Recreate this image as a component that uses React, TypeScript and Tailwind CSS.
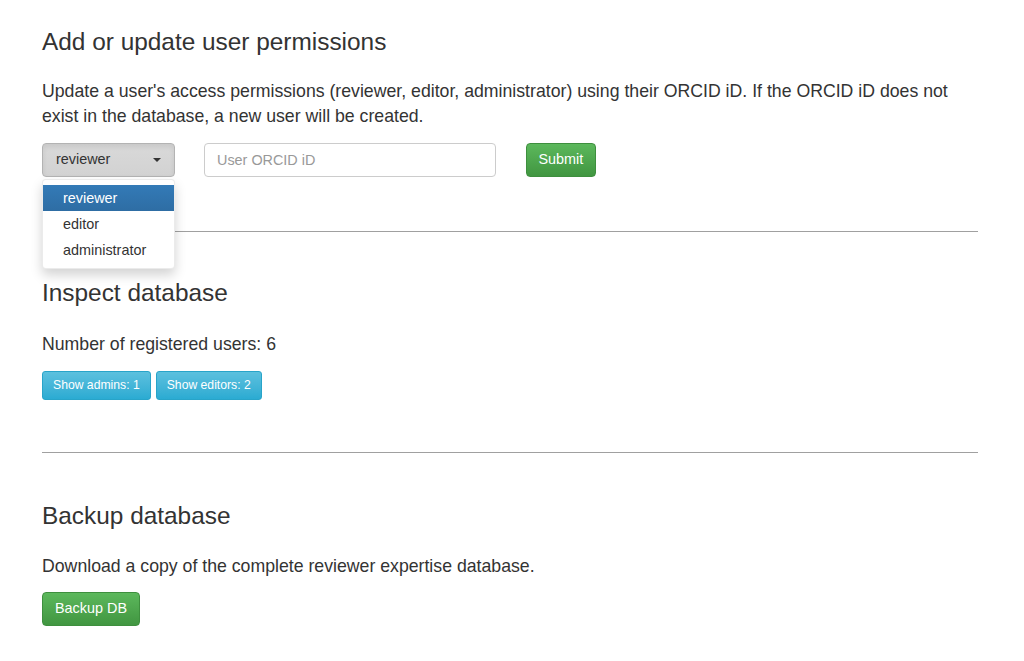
import { useState } from 'react';

const roles = ['reviewer', 'editor', 'administrator'];

export default function App() {
  const [role, setRole] = useState('reviewer');
  const [open, setOpen] = useState(true);
  const [orcid, setOrcid] = useState('');

  return (
    <div className="min-h-screen bg-white text-[#333] font-['Liberation_Sans',Arial,sans-serif]">
      <div className="px-[42px] pt-[29px] w-[1020px]">
        {/* Permissions */}
        <h3 className="text-[24.4px] leading-[26px]">Add or update user permissions</h3>
        <p className="mt-[24px] text-[17.7px] leading-[25px]">
          Update a user's access permissions (reviewer, editor, administrator) using their ORCID iD. If the ORCID iD does not
          exist in the database, a new user will be created.
        </p>
        <div className="mt-[14px] flex items-center">
          <div className="relative">
            <button
              onClick={() => setOpen(!open)}
              className="w-[133px] h-[34px] pl-[13px] pr-[13px] flex items-center justify-between rounded-[4px] border border-[#b3b3b3] bg-gradient-to-b from-[#d9d9d9] to-[#d2d2d2] shadow-[inset_0_3px_5px_rgba(0,0,0,0.08)] text-[14.4px]"
            >
              <span>{role}</span>
              <span className="w-0 h-0 border-l-[4px] border-r-[4px] border-t-[4px] border-l-transparent border-r-transparent border-t-[#333]" />
            </button>
            {open && (
              <ul className="absolute left-0 top-[36px] z-10 w-[133px] py-[5px] rounded-[4px] bg-white border border-black/[0.08] shadow-[0_6px_12px_rgba(0,0,0,0.175)] text-[14.4px]">
                {roles.map((r) => (
                  <li
                    key={r}
                    onClick={() => {
                      setRole(r);
                      setOpen(false);
                    }}
                    className={
                      r === role
                        ? 'h-[26px] leading-[26px] pl-[20px] text-white bg-gradient-to-b from-[#337ab7] to-[#2e6da4] cursor-pointer'
                        : 'h-[26px] leading-[26px] pl-[20px] text-[#333] cursor-pointer'
                    }
                  >
                    {r}
                  </li>
                ))}
              </ul>
            )}
          </div>
          <input
            type="text"
            value={orcid}
            onChange={(e) => setOrcid(e.target.value)}
            placeholder="User ORCID iD"
            className="ml-[29px] w-[292px] h-[34px] px-[12px] rounded-[4px] border border-[#ccc] text-[14.4px] placeholder:text-[#999] focus:outline-none"
          />
          <button className="ml-[30px] h-[34px] px-[11.5px] rounded-[4px] border border-[#3e8f3e] bg-gradient-to-b from-[#5cb85c] to-[#419641] text-white text-[14.4px]">
            Submit
          </button>
        </div>

        <hr className="mt-[54px] border-t border-[#a0a0a0]" />

        {/* Inspect */}
        <h3 className="mt-[48px] text-[24.4px] leading-[26px]">Inspect database</h3>
        <p className="mt-[25.5px] text-[17.7px] leading-[25px]">Number of registered users: 6</p>
        <div className="mt-[14px] flex gap-[5px]">
          <button className="h-[29px] px-[10px] rounded-[3px] border border-[#28a4c9] bg-gradient-to-b from-[#5bc0de] to-[#2aabd2] text-white text-[12.2px]">
            Show admins: 1
          </button>
          <button className="h-[29px] px-[10px] rounded-[3px] border border-[#28a4c9] bg-gradient-to-b from-[#5bc0de] to-[#2aabd2] text-white text-[12.2px]">
            Show editors: 2
          </button>
        </div>

        <hr className="mt-[52px] border-t border-[#a0a0a0]" />

        {/* Backup */}
        <h3 className="mt-[50.5px] text-[24.4px] leading-[26px]">Backup database</h3>
        <p className="mt-[25px] text-[17.7px] leading-[25px]">Download a copy of the complete reviewer expertise database.</p>
        <button className="mt-[13px] h-[34px] px-[12px] rounded-[4px] border border-[#3e8f3e] bg-gradient-to-b from-[#5cb85c] to-[#419641] text-white text-[14.4px]">
          Backup DB
        </button>
      </div>
    </div>
  );
}
